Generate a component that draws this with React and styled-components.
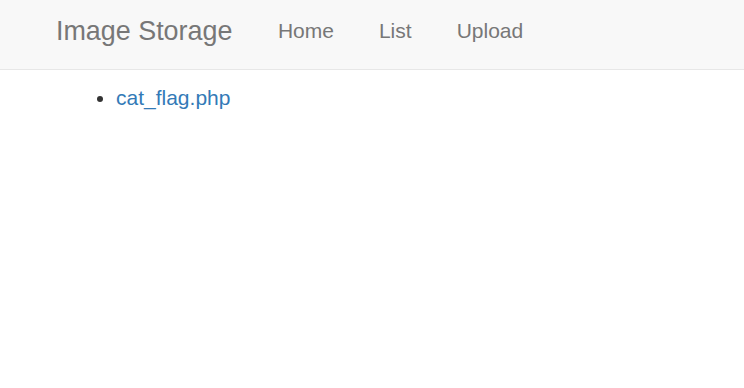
import React from "react";
import styled, { createGlobalStyle } from "styled-components";

const Global = createGlobalStyle`
  html, body { margin: 0; padding: 0; background: #fff; }
  body {
    font-family: "Liberation Sans", Arial, sans-serif;
    font-size: 21px;
    line-height: 1.42857;
    color: #333;
  }
`;

const Navbar = styled.nav`
  background: #f8f8f8;
  border-bottom: 1px solid #e7e7e7;
  height: 69px;
`;

const NavInner = styled.div`
  display: flex;
  align-items: center;
  height: 100%;
  padding-left: 34px;
`;

const Brand = styled.a`
  display: block;
  padding: 0 22px;
  font-size: 26.9px;
  line-height: 30px;
  color: #777;
  text-decoration: none;
  margin-top: -7px;
`;

const NavList = styled.ul`
  display: flex;
  list-style: none;
  margin: -8px 0 0 1px;
  padding: 0;
`;

const NavLink = styled.a`
  display: block;
  padding: 0 22.5px;
  line-height: 30px;
  color: #777;
  text-decoration: none;
`;

const Content = styled.div`
  padding: 13px 0 0 60px;
`;

const Files = styled.ul`
  margin: 0;
  padding-left: 56px;
`;

const FileLink = styled.a`
  color: #337ab7;
  text-decoration: none;
`;

export default function App() {
  return (
    <>
      <Global />
      <Navbar>
        <NavInner>
          <Brand href="#">Image Storage</Brand>
          <NavList>
            <li><NavLink href="#">Home</NavLink></li>
            <li><NavLink href="#">List</NavLink></li>
            <li><NavLink href="#">Upload</NavLink></li>
          </NavList>
        </NavInner>
      </Navbar>
      <Content>
        <Files>
          <li><FileLink href="#">cat_flag.php</FileLink></li>
        </Files>
      </Content>
    </>
  );
}
